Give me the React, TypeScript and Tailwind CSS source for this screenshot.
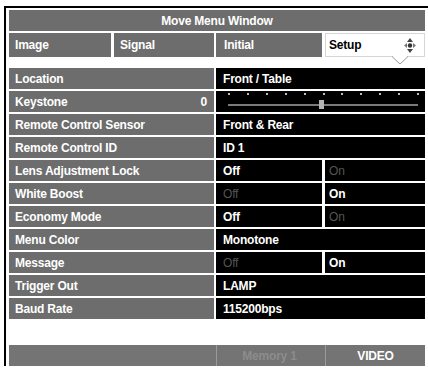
import React from 'react';

type Row =
  | { label: string; value: string }
  | { label: string; split: [string, string]; active: 0 | 1 }
  | { label: string; slider: true; num: string };

const rows: Row[] = [
  { label: 'Location', value: 'Front / Table' },
  { label: 'Keystone', slider: true, num: '0' },
  { label: 'Remote Control Sensor', value: 'Front & Rear' },
  { label: 'Remote Control ID', value: 'ID 1' },
  { label: 'Lens Adjustment Lock', split: ['Off', 'On'], active: 0 },
  { label: 'White Boost', split: ['Off', 'On'], active: 1 },
  { label: 'Economy Mode', split: ['Off', 'On'], active: 0 },
  { label: 'Menu Color', value: 'Monotone' },
  { label: 'Message', split: ['Off', 'On'], active: 1 },
  { label: 'Trigger Out', value: 'LAMP' },
  { label: 'Baud Rate', value: '115200bps' },
];

const MoveIcon = () => (
  <svg width="12" height="15" viewBox="0 0 12 15" className="absolute right-[8px] top-[4px]">
    <polygon points="6,0 9,4 3,4" fill="#444" />
    <polygon points="6,15 9,11 3,11" fill="#444" />
    <polygon points="0,7.5 3,5 3,10" fill="#777" />
    <polygon points="12,7.5 9,5 9,10" fill="#777" />
    <circle cx="6" cy="7.5" r="2.2" fill="#333" />
  </svg>
);

const Slider = () => {
  const ticks = Array.from({ length: 11 }, (_, i) => i);
  return (
    <div className="relative h-full w-full">
      {ticks.map(i => (
        <div
          key={i}
          className="absolute top-[2px] h-[2px] w-[2px] bg-[#bbbbbb]"
          style={{ left: 12 + i * 18.9 }}
        />
      ))}
      <div className="absolute left-[12px] right-[7px] top-[13px] h-[2px] bg-[#7a7a7a]" />
      <div className="absolute left-[103px] top-[9px] h-[9px] w-[5px] bg-[#b5b5b5]" />
    </div>
  );
};

const App = () => {
  return (
    <div
      className="h-[368px] w-[428px] overflow-hidden bg-white pl-[4px] pt-[6px] text-[12px] font-bold tracking-[-0.2px] text-white"
      style={{ fontFamily: '"Liberation Sans", Arial, sans-serif' }}
    >
      <div className="w-[440px] border-l-2 border-t-2 border-black pl-[3px] pt-[2px]">
        <div className="flex w-[416px] flex-col">
          {/* title */}
          <div className="flex h-[21px] items-center justify-center bg-[#6d6d6d]">Move Menu Window</div>

          {/* tabs */}
          <div className="mt-[2px] flex h-[24px]">
            <div className="flex w-[102px] items-center bg-[#6d6d6d] pl-[6px]">Image</div>
            <div className="ml-[3px] flex w-[100px] items-center bg-[#6d6d6d] pl-[6px]">Signal</div>
            <div className="ml-[2px] flex w-[106px] items-center bg-[#6d6d6d] pl-[8px]">Initial</div>
            <div className="relative ml-[3px] flex flex-1 items-center border border-[#d6d6d6] bg-white pl-[3px] text-black">
              Setup
              <MoveIcon />
              <svg width="16" height="9" viewBox="0 0 16 9" className="absolute left-[66px] top-[22px]">
                <polyline points="0,0.5 8,8 16,0.5" fill="none" stroke="#999" strokeWidth="1" />
                <line x1="1" y1="0.5" x2="15" y2="0.5" stroke="white" strokeWidth="1.2" />
              </svg>
            </div>
          </div>

          {/* settings */}
          <div className="mt-[11px] flex flex-col gap-[2px]">
            {rows.map(row => (
              <div key={row.label} className="flex h-[21px]">
                <div className="flex w-[205px] items-center justify-between bg-[#6d6d6d] pl-[6px] pr-[7px]">
                  <span>{row.label}</span>
                  {'slider' in row && <span>{row.num}</span>}
                </div>
                {'value' in row && (
                  <div className="ml-[2px] flex flex-1 items-center bg-black pl-[7px]">{row.value}</div>
                )}
                {'slider' in row && (
                  <div className="ml-[2px] flex-1 bg-black">
                    <Slider />
                  </div>
                )}
                {'split' in row && (
                  <>
                    <div
                      className={
                        row.active === 0
                          ? 'ml-[2px] flex w-[106px] items-center bg-black pl-[7px]'
                          : 'ml-[2px] flex w-[106px] items-center bg-black pl-[7px] font-normal text-[#555555]'
                      }
                    >
                      {row.split[0]}
                    </div>
                    <div
                      className={
                        row.active === 1
                          ? 'ml-[3px] flex flex-1 items-center bg-black pl-[4px]'
                          : 'ml-[3px] flex flex-1 items-center bg-black pl-[4px] font-normal text-[#555555]'
                      }
                    >
                      {row.split[1]}
                    </div>
                  </>
                )}
              </div>
            ))}
          </div>

          {/* bottom bar */}
          <div className="mt-[26px] flex h-[21px] bg-[#747474]">
            <div className="w-[205px]" />
            <div className="ml-[2px] flex w-[106px] items-center justify-center border-l border-[#9a9a9a] text-[#8c8c8c]">
              Memory 1
            </div>
            <div className="ml-[3px] flex flex-1 items-center justify-center border-l border-[#9a9a9a]">VIDEO</div>
          </div>
        </div>
      </div>
    </div>
  );
};

export default App;
